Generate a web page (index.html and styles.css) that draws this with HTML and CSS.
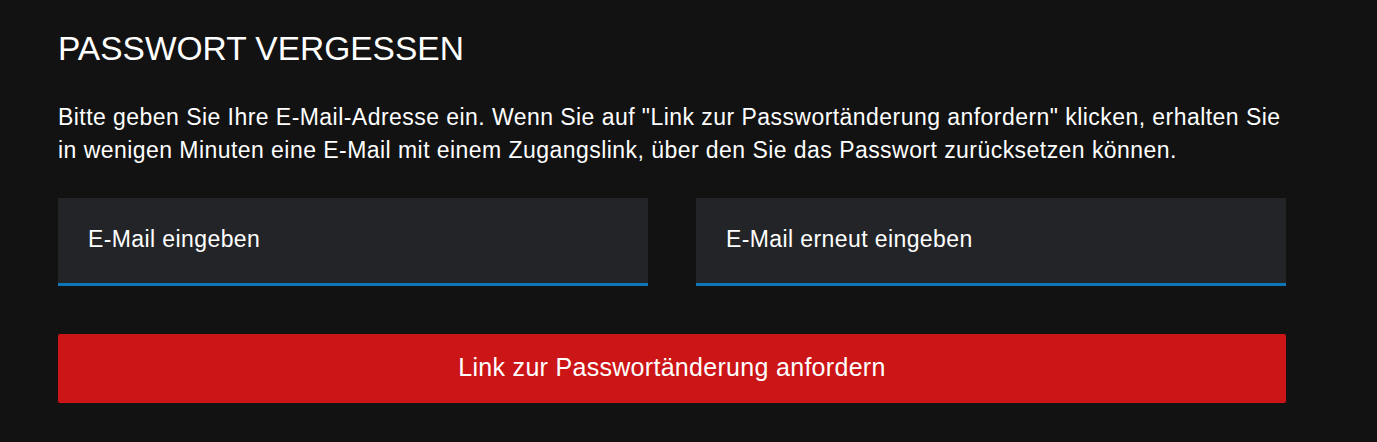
FILE: index.html
```html
<!DOCTYPE html>
<html lang="de">
<head>
<meta charset="utf-8">
<title>Passwort vergessen</title>
<link rel="stylesheet" href="styles.css">
</head>
<body>
<main class="page">
  <h1 class="title">PASSWORT VERGESSEN</h1>
  <p class="intro">Bitte geben Sie Ihre E-Mail-Adresse ein. Wenn Sie auf "Link zur Passwortänderung anfordern" klicken, erhalten Sie in wenigen Minuten eine E-Mail mit einem Zugangslink, über den Sie das Passwort zurücksetzen können.</p>
  <form class="form">
    <div class="fields">
      <input class="field" type="email" placeholder="E-Mail eingeben">
      <input class="field" type="email" placeholder="E-Mail erneut eingeben">
    </div>
    <button class="submit" type="button">Link zur Passwortänderung anfordern</button>
  </form>
</main>
</body>
</html>
```

FILE: styles.css
```css
html, body {
  margin: 0;
  padding: 0;
  background: #121212;
}
body {
  font-family: "Liberation Sans", Arial, sans-serif;
  color: #ffffff;
}
.page {
  width: 1228px;
  padding: 30px 0 0 58px;
}
.title {
  margin: 0;
  font-size: 33.5px;
  font-weight: 400;
  line-height: 38px;
}
.intro {
  margin: 33px 0 0;
  font-size: 23px;
  letter-spacing: 0.45px;
  line-height: 33px;
}
.form {
  margin-top: 31px;
}
.fields {
  display: grid;
  grid-template-columns: 1fr 1fr;
  gap: 48px;
}
.field {
  height: 88px;
  box-sizing: border-box;
  border: 0;
  border-bottom: 3px solid #0a78b8;
  background: #232427;
  padding: 0 30px 2px;
  font-family: inherit;
  font-size: 23px;
  letter-spacing: 0.4px;
  color: #fff;
  outline: none;
}
.field::placeholder {
  color: #ffffff;
  opacity: 1;
}
.submit {
  display: block;
  width: 100%;
  height: 69px;
  margin-top: 48px;
  padding: 0 0 2px;
  border: 0;
  border-radius: 2px;
  background: #cc1517;
  color: #fff;
  font-family: inherit;
  font-size: 25px;
  letter-spacing: 0.3px;
  cursor: pointer;
}
```
